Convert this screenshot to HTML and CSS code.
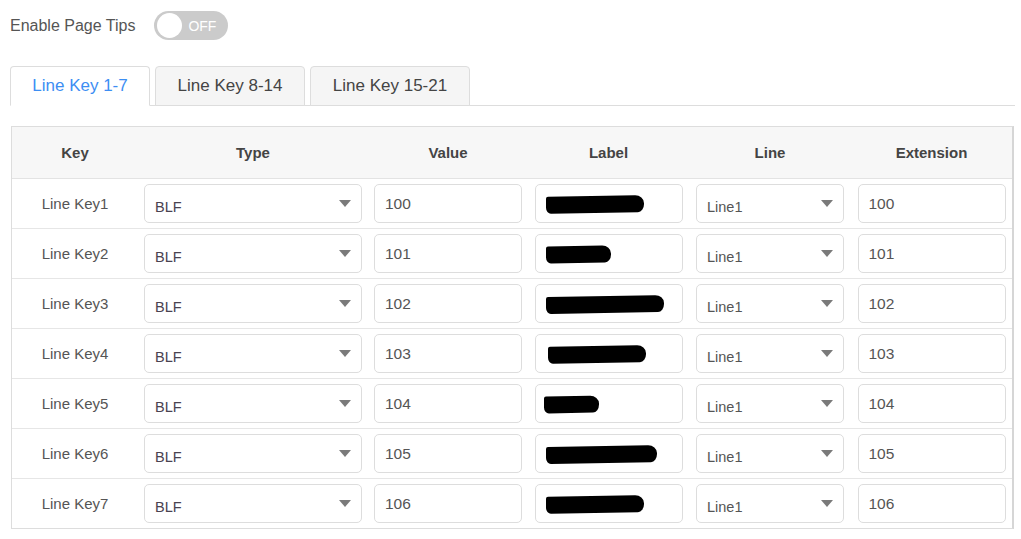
FILE: index.html
```html
<!DOCTYPE html>
<html lang="en">
<head>
	<meta charset="UTF-8">
	<title>Line Key</title>
	<link rel="stylesheet" href="styles.css">
</head>
<body>
	<div class="tips">
		<span class="tipsText">Enable Page Tips</span>
		<a href="javascript:;" class="switch">
			<span class="knob"></span>
			<span class="switchText">OFF</span>
		</a>
	</div>

	<ul class="tabs">
		<li class="tab1 cur">Line Key 1-7</li>
		<li class="tab2">Line Key 8-14</li>
		<li class="tab3">Line Key 15-21</li>
	</ul>

	<div class="keyTable">
		<table>
			<colgroup>
				<col class="cKey"><col class="cType"><col class="cValue"><col class="cLabel"><col class="cLine"><col class="cExt">
			</colgroup>
			<thead>
				<tr><th>Key</th><th>Type</th><th>Value</th><th>Label</th><th>Line</th><th>Extension</th></tr>
			</thead>
			<tbody>
				<tr>
					<td class="key">Line Key1</td>
					<td><div class="select wide"><span>BLF</span><i class="arrow"></i></div></td>
					<td><div class="field">100</div></td>
					<td><div class="field"><span class="redact" style="width:98px"></span></div></td>
					<td><div class="select"><span>Line1</span><i class="arrow"></i></div></td>
					<td><div class="field">100</div></td>
				</tr>
				<tr>
					<td class="key">Line Key2</td>
					<td><div class="select wide"><span>BLF</span><i class="arrow"></i></div></td>
					<td><div class="field">101</div></td>
					<td><div class="field"><span class="redact" style="width:65px"></span></div></td>
					<td><div class="select"><span>Line1</span><i class="arrow"></i></div></td>
					<td><div class="field">101</div></td>
				</tr>
				<tr>
					<td class="key">Line Key3</td>
					<td><div class="select wide"><span>BLF</span><i class="arrow"></i></div></td>
					<td><div class="field">102</div></td>
					<td><div class="field"><span class="redact" style="width:118px"></span></div></td>
					<td><div class="select"><span>Line1</span><i class="arrow"></i></div></td>
					<td><div class="field">102</div></td>
				</tr>
				<tr>
					<td class="key">Line Key4</td>
					<td><div class="select wide"><span>BLF</span><i class="arrow"></i></div></td>
					<td><div class="field">103</div></td>
					<td><div class="field"><span class="redact" style="width:98px;margin-left:2px"></span></div></td>
					<td><div class="select"><span>Line1</span><i class="arrow"></i></div></td>
					<td><div class="field">103</div></td>
				</tr>
				<tr>
					<td class="key">Line Key5</td>
					<td><div class="select wide"><span>BLF</span><i class="arrow"></i></div></td>
					<td><div class="field">104</div></td>
					<td><div class="field"><span class="redact" style="width:55px;margin-left:-2px"></span></div></td>
					<td><div class="select"><span>Line1</span><i class="arrow"></i></div></td>
					<td><div class="field">104</div></td>
				</tr>
				<tr>
					<td class="key">Line Key6</td>
					<td><div class="select wide"><span>BLF</span><i class="arrow"></i></div></td>
					<td><div class="field">105</div></td>
					<td><div class="field"><span class="redact" style="width:111px"></span></div></td>
					<td><div class="select"><span>Line1</span><i class="arrow"></i></div></td>
					<td><div class="field">105</div></td>
				</tr>
				<tr>
					<td class="key">Line Key7</td>
					<td><div class="select wide"><span>BLF</span><i class="arrow"></i></div></td>
					<td><div class="field">106</div></td>
					<td><div class="field"><span class="redact" style="width:98px"></span></div></td>
					<td><div class="select"><span>Line1</span><i class="arrow"></i></div></td>
					<td><div class="field">106</div></td>
				</tr>
			</tbody>
		</table>
	</div>
</body>
</html>
```

FILE: styles.css
```css
*{
	margin: 0;
	padding: 0;
	box-sizing: border-box;
}
body{
	padding: 11px 6px 0 10px;
	font-family: "Liberation Sans", Arial, sans-serif;
	color: #555;
	background-color: #fff;
}
.tips{
	display: flex;
	align-items: center;
	height: 29px;
}
.tipsText{
	font-size: 16px;
	color: #555;
}
.switch{
	display: flex;
	align-items: center;
	width: 74px;
	height: 29px;
	margin-left: 19px;
	padding-left: 3px;
	border-radius: 15px;
	background-color: #cbcbcb;
	text-decoration: none;
}
.switch .knob{
	width: 25px;
	height: 25px;
	border-radius: 50%;
	background-color: #fff;
}
.switch .switchText{
	margin-left: 6px;
	font-size: 14px;
	color: #fff;
}
.tabs{
	display: flex;
	list-style: none;
	margin-top: 26px;
	height: 40px;
	border-bottom: 1px solid #ddd;
}
.tabs li{
	height: 40px;
	line-height: 38px;
	text-align: center;
	font-size: 17px;
	color: #444;
	background-color: #f5f5f5;
	border: 1px solid #ddd;
	border-radius: 4px 4px 0 0;
	margin-right: 5px;
}
.tabs li.tab1{
	width: 140px;
}
.tabs li.tab2{
	width: 150px;
}
.tabs li.tab3{
	width: 160px;
}
.tabs li.cur{
	color: #3d8ef3;
	background-color: #fff;
	border-bottom-color: #fff;
}
.keyTable{
	margin: 20px 0 0 1px;
	width: 1003px;
	border: 1px solid #ddd;
	border-right: 2px solid #d6d6d6;
}
.keyTable table{
	width: 1000px;
	table-layout: fixed;
	border-collapse: separate;
	border-spacing: 0;
}
.cKey{ width: 126px; }
.cType{ width: 230px; }
.cValue{ width: 160px; }
.cLabel{ width: 161px; }
.cLine{ width: 162px; }
.cExt{ width: 161px; }
.keyTable th{
	height: 52px;
	background-color: #f7f7f7;
	border-bottom: 1px solid #e3e3e3;
	font-size: 15px;
	font-weight: bold;
	color: #444;
	text-align: center;
}
.keyTable td{
	height: 50px;
	padding: 5px 0;
	border-bottom: 1px solid #e6e6e6;
	text-align: center;
}
.keyTable tbody tr:last-child td{
	border-bottom: none;
	height: 49px;
}
.keyTable td.key{
	font-size: 15px;
	color: #555;
}
.field,
.select{
	display: flex;
	align-items: center;
	width: 148px;
	height: 39px;
	margin: 0 auto;
	padding: 0 10px;
	border: 1px solid #ddd;
	border-radius: 5px;
	background-color: #fff;
	text-align: left;
	font-size: 15.5px;
	color: #555;
}
.select{
	justify-content: space-between;
	padding-top: 7px;
	font-size: 14.5px;
}
.select.wide{
	width: 218px;
	font-size: 14.5px;
	color: #4a4250;
}
.select .arrow{
	width: 0;
	height: 0;
	margin-top: -8px;
	border-left: 6px solid transparent;
	border-right: 6px solid transparent;
	border-top: 7px solid #7a7a7a;
}
.redact{
	display: inline-block;
	height: 17px;
	margin-top: 2px;
	border-radius: 2px 9px 6px 5px / 2px 8px 8px 6px;
	background-color: #000;
	transform: skewY(-1deg);
}
```
